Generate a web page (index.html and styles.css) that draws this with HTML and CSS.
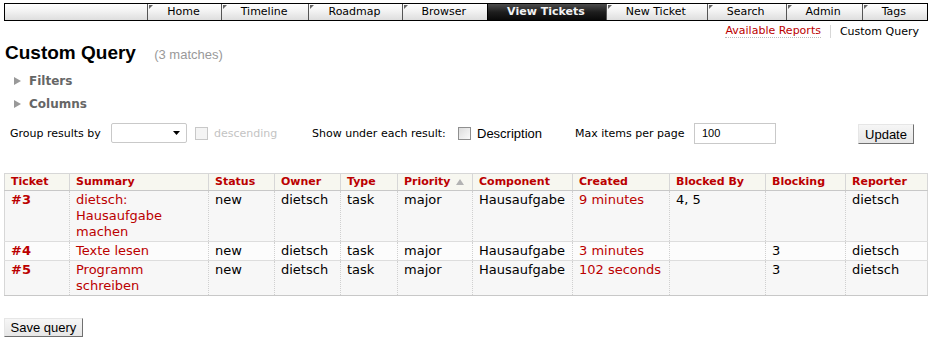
FILE: index.html
```html
<!DOCTYPE html>
<html lang="de">
<head>
    <meta charset="UTF-8">
    <title>Custom Query</title>
    <link rel="stylesheet" href="styles.css">
</head>
<body>
<div class="page">
    <div class="mainnav">
        <ul>
            <li class="nav-home"><a href="#">Home</a></li>
            <li class="nav-timeline"><a href="#">Timeline</a></li>
            <li class="nav-roadmap"><a href="#">Roadmap</a></li>
            <li class="nav-browser"><a href="#">Browser</a></li>
            <li class="nav-tickets active"><a href="#">View Tickets</a></li>
            <li class="nav-newticket"><a href="#">New Ticket</a></li>
            <li class="nav-search"><a href="#">Search</a></li>
            <li class="nav-admin"><a href="#">Admin</a></li>
            <li class="nav-tags"><a href="#">Tags</a></li>
        </ul>
    </div>

    <div class="ctxtnav">
        <a href="#">Available Reports</a>
        <span class="ctx-sep"></span>
        <span>Custom Query</span>
    </div>

    <h1>Custom Query <span class="numrows">(3 matches)</span></h1>

    <div class="folds">
        <div class="fold"><span class="fold-arrow"></span>Filters</div>
        <div class="fold"><span class="fold-arrow"></span>Columns</div>
    </div>

    <form class="query-options">
        <div class="opt-group grouping">
            <label for="group" class="group-label">Group results by</label>
            <span class="select-wrap">
                <select id="group"><option></option></select>
                <svg class="select-arrow" width="7" height="4" viewBox="0 0 7 4"><path d="M0 0h7L3.5 4z" fill="#000"/></svg>
            </span>
            <input type="checkbox" class="check" id="groupdesc" disabled>
            <label for="groupdesc" class="disabled">descending</label>
        </div>
        <div class="opt-group rows">
            <label for="row_description" class="rows-label">Show under each result:</label>
            <input type="checkbox" class="check" id="row_description">
            <label for="row_description" class="desc-label">Description</label>
        </div>
        <div class="opt-group max">
            <label for="max" class="max-label">Max items per page</label>
            <input type="text" id="max" class="max-input" value="100">
        </div>
        <button type="button" class="btn update">Update</button>
    </form>

    <table class="listing">
        <colgroup>
            <col class="c-id"><col class="c-summary"><col class="c-status"><col class="c-owner">
            <col class="c-type"><col class="c-priority"><col class="c-component"><col class="c-created">
            <col class="c-blockedby"><col class="c-blocking"><col class="c-reporter">
        </colgroup>
        <thead>
            <tr>
                <th>Ticket</th>
                <th>Summary</th>
                <th>Status</th>
                <th>Owner</th>
                <th>Type</th>
                <th>Priority <svg class="sort-arrow" width="8" height="6" viewBox="0 0 8 6"><path d="M4 0L8 6H0z" fill="#b3b3b3"/></svg></th>
                <th>Component</th>
                <th>Created</th>
                <th>Blocked By</th>
                <th>Blocking</th>
                <th>Reporter</th>
            </tr>
        </thead>
        <tbody>
            <tr class="odd">
                <td class="id"><a href="#">#3</a></td>
                <td><a href="#">dietsch: Hausaufgabe machen</a></td>
                <td>new</td>
                <td>dietsch</td>
                <td>task</td>
                <td>major</td>
                <td>Hausaufgabe</td>
                <td><a href="#">9 minutes</a></td>
                <td>4, 5</td>
                <td></td>
                <td>dietsch</td>
            </tr>
            <tr class="even">
                <td class="id"><a href="#">#4</a></td>
                <td><a href="#">Texte lesen</a></td>
                <td>new</td>
                <td>dietsch</td>
                <td>task</td>
                <td>major</td>
                <td>Hausaufgabe</td>
                <td><a href="#">3 minutes</a></td>
                <td></td>
                <td>3</td>
                <td>dietsch</td>
            </tr>
            <tr class="odd">
                <td class="id"><a href="#">#5</a></td>
                <td><a href="#">Programm schreiben</a></td>
                <td>new</td>
                <td>dietsch</td>
                <td>task</td>
                <td>major</td>
                <td>Hausaufgabe</td>
                <td><a href="#">102 seconds</a></td>
                <td></td>
                <td>3</td>
                <td>dietsch</td>
            </tr>
        </tbody>
    </table>

    <button type="button" class="btn save">Save query</button>
</div>
</body>
</html>
```

FILE: styles.css
```css
body {
    margin: 0;
    background: #fff;
    color: #000;
    font-family: "DejaVu Sans", Verdana, sans-serif;
    font-size: 13px;
}

.page {
    padding: 3px 5px 0 4px;
}

/* top navigation bar */
.mainnav {
    display: flex;
    justify-content: flex-end;
    height: 16px;
    border: 1px solid #000;
    background: linear-gradient(#fff, #f4f4f4 40%, #dedede);
    font-size: 11px;
    line-height: 16px;
}

.mainnav ul {
    display: flex;
    list-style: none;
    margin: 0;
    padding: 0;
}

.mainnav li {
    position: relative;
    border-left: 1px solid #555;
}

.mainnav li::before {
    content: "";
    position: absolute;
    top: 1px;
    left: 1px;
    border-top: 4px solid #666;
    border-right: 4px solid transparent;
}

.mainnav a {
    display: block;
    padding: 0 21px 0 19px;
    color: #000;
    text-decoration: none;
}

.mainnav .active {
    border-left-color: #000;
}

.mainnav .active::before {
    display: none;
}

.mainnav .active a {
    background: linear-gradient(#4c4c4c, #1e1e1e 50%, #0a0a0a);
    color: #f2f2f2;
    font-weight: bold;
}

/* context navigation */
.ctxtnav {
    display: flex;
    justify-content: flex-end;
    align-items: center;
    height: 16px;
    margin-top: 2px;
    padding-right: 9px;
    font-size: 11px;
}

.ctxtnav a {
    color: #b00;
    text-decoration: none;
    border-bottom: 1px dotted #bbb;
}

.ctx-sep {
    width: 1px;
    height: 13px;
    margin: 0 9px;
    background: #d7d7d7;
}

h1 {
    margin: 3px 0 0 1px;
    font: bold 19px/22px "Liberation Sans", Arial, sans-serif;
}

.numrows {
    margin-left: 13px;
    color: #999;
    font-size: 13px;
    font-weight: normal;
}

/* foldable sections */
.folds {
    margin-top: 5px;
}

.fold {
    display: flex;
    align-items: center;
    height: 20px;
    margin-bottom: 3px;
    padding-left: 10px;
    color: #666;
    font-size: 12px;
    font-weight: bold;
}

.fold-arrow {
    width: 0;
    height: 0;
    margin-right: 8px;
    border-left: 7px solid #999;
    border-top: 4px solid transparent;
    border-bottom: 4px solid transparent;
}

/* query options */
.query-options {
    display: flex;
    align-items: center;
    height: 24px;
    margin-top: 7px;
    padding-left: 6px;
    font-size: 11px;
}

.opt-group {
    display: flex;
    align-items: center;
}

.grouping {
    width: 302px;
}

.rows {
    width: 263px;
}

.group-label {
    width: 94px;
}

.rows-label {
    width: 141px;
}

.max-label {
    width: 113px;
}

.select-wrap {
    position: relative;
    margin-left: 7px;
}

.select-wrap select {
    display: block;
    width: 76px;
    height: 20px;
    border: 1px solid #c9c9c9;
    border-radius: 2px;
    background: #fff;
    appearance: none;
}

.select-arrow {
    position: absolute;
    top: 8px;
    right: 7px;
}

.check {
    width: 13px;
    height: 13px;
    margin: 0 6px 0 8px;
    border: 1px solid #8f8f8f;
    background: linear-gradient(135deg, #dcdcdc, #fbfbfb);
    appearance: none;
}

.check:disabled {
    border-color: #c8c8c8;
    background: #f4f4f4;
}

.rows .check {
    margin-left: 5px;
}

.disabled {
    color: #c3c3c3;
}

.desc-label {
    font: 13px "Liberation Sans", Arial, sans-serif;
}

.max-input {
    width: 82px;
    height: 21px;
    margin-left: 6px;
    padding: 0 0 0 7px;
    box-sizing: border-box;
    border: 1px solid #c9c9c9;
    font: 11px "Liberation Sans", Arial, sans-serif;
}

.btn {
    height: 20px;
    padding: 0;
    border: 1px solid;
    border-color: #e6e6e6 #707070 #707070 #e6e6e6;
    background: linear-gradient(#f6f6f6, #e6e6e6);
    color: #000;
    font: 13px "Liberation Sans", Arial, sans-serif;
}

.update {
    width: 56px;
    margin-left: auto;
    margin-right: 14px;
    margin-top: 2px;
}

/* ticket listing */
.listing {
    width: 924px;
    margin-top: 28px;
    border: 1px solid #d7d7d7;
    border-collapse: collapse;
    table-layout: fixed;
}

.c-id { width: 65px; }
.c-summary { width: 139px; }
.c-status { width: 66px; }
.c-owner { width: 66px; }
.c-type { width: 57px; }
.c-priority { width: 75px; }
.c-component { width: 100px; }
.c-created { width: 97px; }
.c-blockedby { width: 96px; }
.c-blocking { width: 80px; }

.listing th {
    height: 16px;
    padding: 0 6px;
    border: 1px solid #d7d7d7;
    border-bottom-color: #c8c8c8;
    background: #f7f7f0;
    color: #b00;
    font-size: 11px;
    line-height: 16px;
    text-align: left;
    white-space: nowrap;
}

.sort-arrow {
    margin-left: 2px;
}

.listing td {
    padding: 1px 6px;
    border-left: 1px dotted #d0d0d0;
    line-height: 16px;
    vertical-align: top;
}

.listing tbody tr {
    border-top: 1px solid #ddd;
}

.listing tbody tr:last-child {
    border-bottom: 1px solid #c8c8c8;
}

.listing .odd {
    background: #f7f7f7;
}

.listing .even {
    background: #fcfcfc;
}

.listing a {
    color: #b00;
    text-decoration: none;
}

.listing .id a {
    font-weight: bold;
}

.save {
    width: 79px;
    margin-top: 22px;
    height: 19px;
}
```
